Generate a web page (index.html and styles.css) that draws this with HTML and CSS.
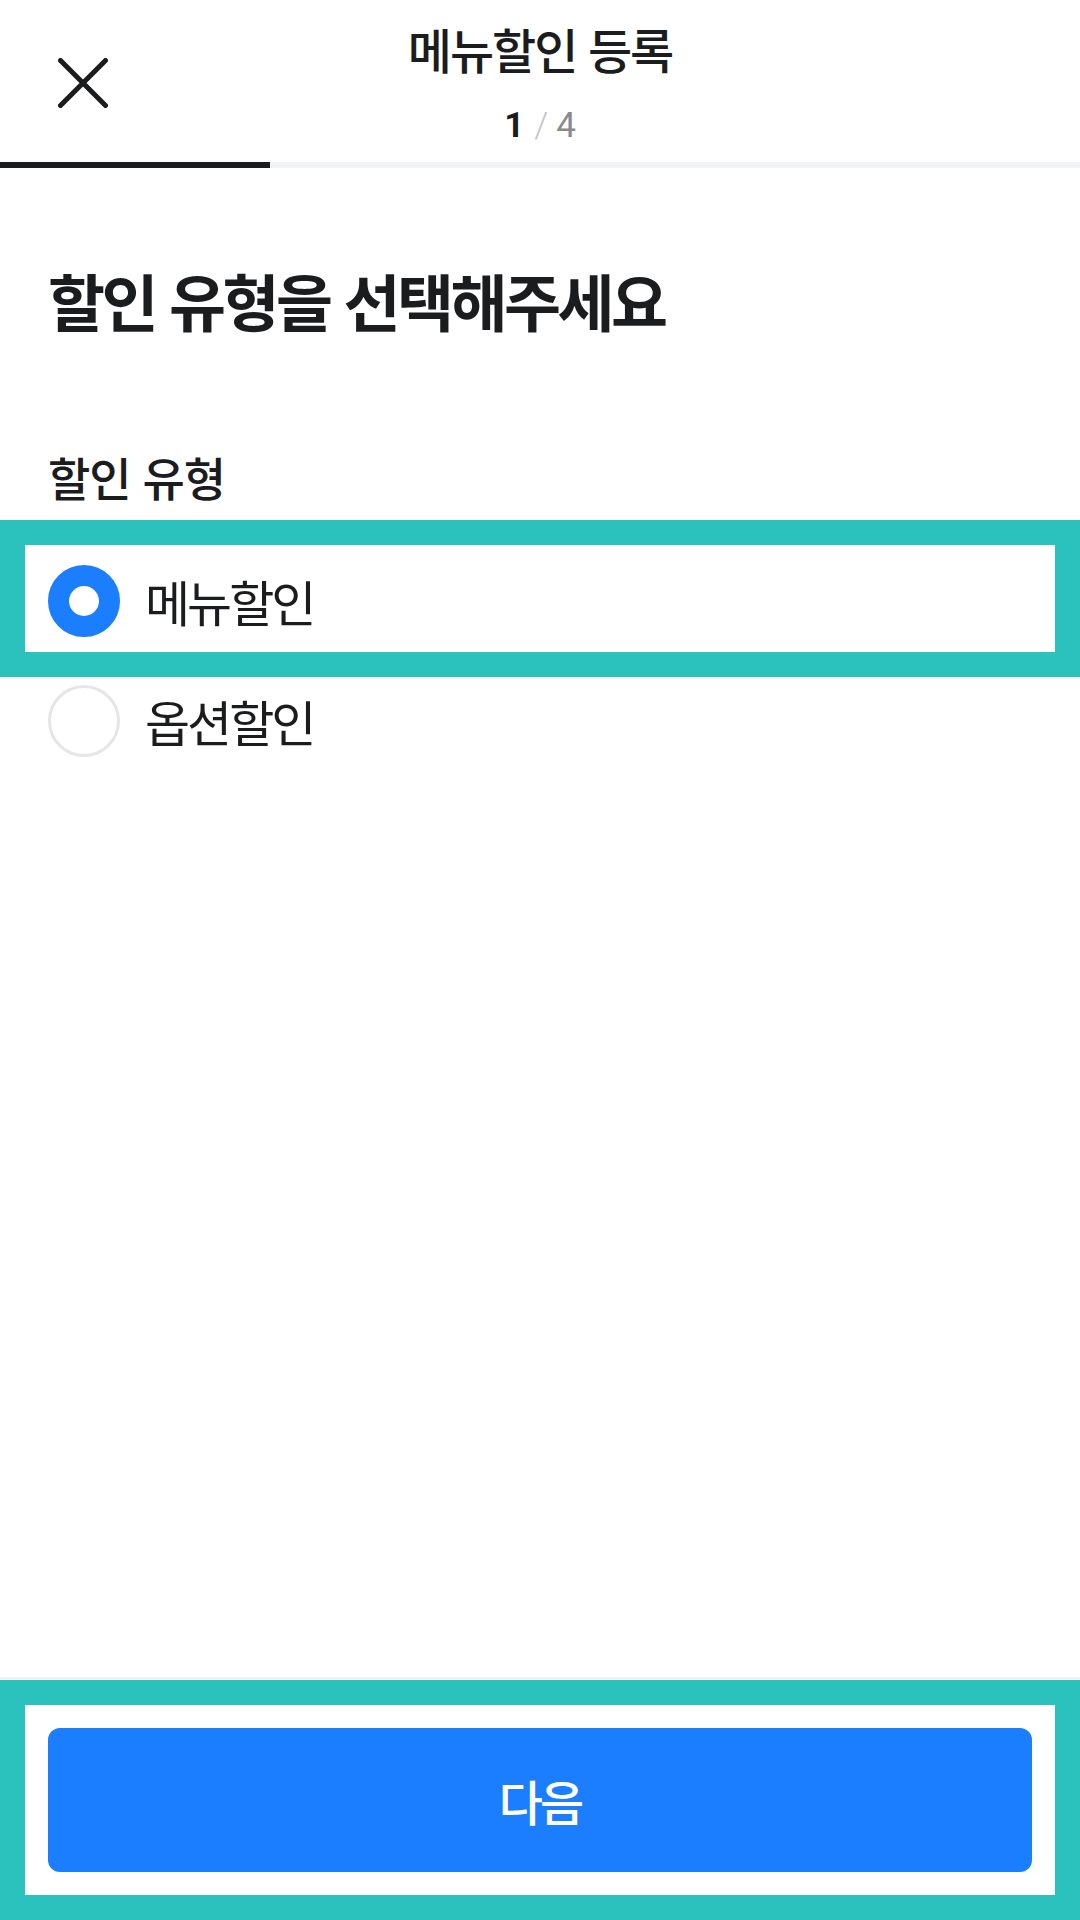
FILE: index.html
```html
<!DOCTYPE html>
<html lang="ko">
<head>
<meta charset="utf-8">
<title>메뉴할인 등록</title>
<link rel="stylesheet" href="styles.css">
</head>
<body>
<div class="screen">
  <header class="topbar">
    <div class="close-cell">
      <svg class="close-icon" viewBox="0 0 50 50" width="50" height="50" aria-label="닫기">
        <path d="M2.5 2.5 L47.5 47.5 M47.5 2.5 L2.5 47.5" stroke="#1b1c1e" stroke-width="5" stroke-linecap="round" fill="none"/>
      </svg>
    </div>
    <div class="title-cell">
      <div class="title">메뉴할인 등록</div>
      <div class="counter"><span class="cur">1</span><span class="sep">/</span><span class="total">4</span></div>
    </div>
    <div class="spacer-cell"></div>
  </header>
  <div class="progress"><div class="progress-fill"></div></div>

  <main class="content">
    <h1 class="heading">할인 유형을 선택해주세요</h1>
    <div class="field-label">할인 유형</div>
    <div class="options">
      <div class="option option-highlight">
        <span class="radio radio-on"></span>
        <span class="option-text">메뉴할인</span>
      </div>
      <div class="option option-plain">
        <span class="radio radio-off"></span>
        <span class="option-text">옵션할인</span>
      </div>
    </div>
  </main>

  <footer class="footer">
    <div class="footer-box">
      <button class="next-btn" type="button">다음</button>
    </div>
  </footer>
</div>
</body>
</html>
```

FILE: styles.css
```css
* {
  box-sizing: border-box;
}

html, body {
  margin: 0;
  padding: 0;
  background: #ffffff;
}

body {
  font-family: "Noto Sans CJK KR", "Noto Sans", sans-serif;
  color: #1b1c1e;
}

.screen {
  width: 1080px;
  height: 1920px;
  display: flex;
  flex-direction: column;
}

/* Header */
.topbar {
  height: 162px;
  display: grid;
  grid-template-columns: 166px 1fr 166px;
}

.close-cell {
  padding: 58px 0 0 58px;
}

.close-icon {
  display: block;
}

.title-cell {
  display: flex;
  flex-direction: column;
  align-items: center;
  padding-top: 16px;
}

.title {
  font-size: 48px;
  line-height: 64px;
  font-weight: 500;
  letter-spacing: -2px;
}

.counter {
  margin-top: 26px;
  font-family: "Roboto", "Noto Sans", sans-serif;
  font-size: 35px;
  line-height: 40px;
  display: flex;
  align-items: baseline;
}

.counter .cur {
  font-weight: 700;
  color: #1b1c1e;
}

.counter .sep {
  color: #c4c4c4;
  font-weight: 300;
  margin: 0 8px 0 10px;
}

.counter .total {
  color: #8a8a8a;
}

.progress {
  height: 6px;
  background: #f2f3f5;
}

.progress-fill {
  width: 25%;
  height: 100%;
  background: #1b1c1e;
}

/* Content */
.content {
  display: flex;
  flex-direction: column;
}

.heading {
  margin: 0;
  padding: 92px 48px 0 48px;
  font-size: 62px;
  line-height: 80px;
  font-weight: 700;
  letter-spacing: -3.5px;
}

.field-label {
  padding: 108px 48px 0 48px;
  font-size: 46px;
  line-height: 56px;
  font-weight: 500;
  letter-spacing: -1px;
}

.options {
  margin-top: 16px;
  display: flex;
  flex-direction: column;
}

.option {
  display: flex;
  align-items: center;
  gap: 25px;
}

.option-highlight {
  border: 25px solid #2bc1bc;
  padding: 20px 23px 15px 23px;
}

.option-plain {
  padding: 8px 48px 0 48px;
}

.radio {
  width: 72px;
  height: 72px;
  border-radius: 50%;
  flex: none;
}

.radio-on {
  border: 21px solid #1b7eff;
  background: #ffffff;
}

.radio-off {
  border: 3px solid #e6e6e6;
  background: #ffffff;
}

.option-text {
  font-size: 49px;
  line-height: 60px;
  font-weight: 400;
  letter-spacing: -3px;
}

/* Footer */
.footer {
  margin-top: auto;
  border-top: 3px solid #f2f2f2;
}

.footer-box {
  border: 25px solid #2bc1bc;
  padding: 23px;
}

.next-btn {
  display: block;
  width: 100%;
  height: 144px;
  border: none;
  border-radius: 12px;
  background: #1b7eff;
  color: #ffffff;
  font-family: "Noto Sans CJK KR", "Noto Sans", sans-serif;
  font-size: 48px;
  font-weight: 500;
  letter-spacing: -3px;
}
```
